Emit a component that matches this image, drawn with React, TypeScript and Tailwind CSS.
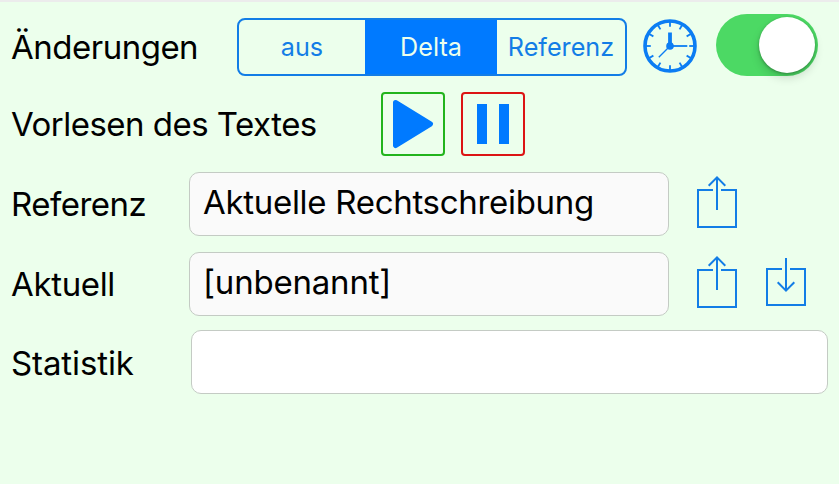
import React from "react";

const BLUE = "#137de6";

function Clock() {
  const ticks = Array.from({ length: 12 }, (_, i) => i * 30);
  return (
    <svg className="ml-[15px] mt-[2px] h-[56px] w-[56px]" viewBox="-28 -28 56 56" fill="none" stroke="#0c7df3">
      <circle r="25" strokeWidth="3.6" />
      {ticks.map((a) => (
        <line key={a} y1="-24" y2="-19.2" strokeWidth="1.8" transform={`rotate(${a})`} />
      ))}
      <line y1="0" y2="-13.5" strokeWidth="3.8" />
      <line x1="0" x2="17.3" strokeWidth="1.8" />
      <line x1="0" y1="0" x2="-11.2" y2="11.2" strokeWidth="1.3" />
      <circle r="3.8" fill="#0c7df3" stroke="none" />
    </svg>
  );
}

function ShareIcon() {
  return (
    <svg className="h-16 w-[42px] shrink-0" viewBox="0 0 42 64" fill="none" stroke={BLUE} strokeWidth="2">
      <path d="M17 18H2v37h38V18H25" />
      <path d="M21 38V5M12.7 13.7L21 5.4l8.3 8.3" />
    </svg>
  );
}

function ImportIcon() {
  return (
    <svg className="h-16 w-[42px] shrink-0" viewBox="0 0 42 64" fill="none" stroke={BLUE} strokeWidth="2">
      <path d="M17 17H2v36h38V17H25" />
      <path d="M21 6v33M12.7 30.3L21 38.6l8.3-8.3" />
    </svg>
  );
}

const field = "flex h-16 shrink-0 items-center rounded-[10px] border border-[#c4cbc4] px-[13px] pb-1";

export default function App() {
  return (
    <div className="h-[484px] w-[839px] overflow-hidden whitespace-nowrap bg-[#ecffec] font-['Inter','Liberation_Sans',sans-serif] text-[33px] leading-[40px] text-black">
      <div className="h-[2px] bg-[#ececec]" />
      <div className="flex flex-col gap-4 pl-[11px] pt-3">
        <div className="flex h-[62px] items-center">
          <span className="w-[226px] pt-[3px] tracking-[-0.5px]">Änderungen</span>
          <div className="flex h-[58px] w-[390px] self-end overflow-hidden rounded-[8px] border-2 border-[#137de6] text-[25.2px] leading-[55px] text-[#137de6]">
            <span className="w-[126px] text-center">aus</span>
            <span className="w-[132px] bg-[#007aff] text-center text-[#ecffec]">Delta</span>
            <span className="flex-1 text-center">Referenz</span>
          </div>
          <Clock />
          <div className="ml-[18px] flex h-[62px] w-[102px] items-center justify-end rounded-full bg-[#4cd964] pr-[3px]">
            <div className="h-14 w-14 rounded-full bg-white shadow-[0_5px_10px_rgba(0,0,0,0.15),0_1px_3px_rgba(0,0,0,0.3)]" />
          </div>
        </div>
        <div className="flex h-16 items-center">
          <span className="w-[370px] tracking-[-0.52px]">Vorlesen des Textes</span>
          <div className="h-16 w-16 rounded-[4px] border-2 border-[#22b41c]">
            <svg className="h-[60px] w-[60px]" viewBox="0 0 60 60">
              <path d="M12.5 8.5L47.5 30L12.5 51.5Z" fill="#007aff" stroke="#007aff" strokeWidth="5" strokeLinejoin="round" />
            </svg>
          </div>
          <div className="ml-4 flex h-16 w-16 items-center justify-center gap-3 rounded-[4px] border-2 border-[#dc1414]">
            <div className="h-10 w-[10px] bg-[#007aff]" />
            <div className="h-10 w-[10px] bg-[#007aff]" />
          </div>
        </div>
        <div className="flex h-16 items-center">
          <span className="w-[178px] tracking-[-0.5px]">Referenz</span>
          <div className={`${field} mr-[27px] w-[480px] bg-[#fafafa] tracking-[-0.3px]`}>Aktuelle Rechtschreibung</div>
          <ShareIcon />
        </div>
        <div className="flex h-16 items-center">
          <span className="w-[178px] tracking-[-0.35px]">Aktuell</span>
          <div className={`${field} mr-[27px] w-[480px] bg-[#fafafa] tracking-[-0.2px]`}>[unbenannt]</div>
          <ShareIcon />
          <div className="w-[27px]" />
          <ImportIcon />
        </div>
        <div className="-mt-[2px] flex h-16 items-center">
          <span className="w-[180px] pt-[1px] tracking-[-0.1px]">Statistik</span>
          <div className={`${field} w-[637px] bg-white`} />
        </div>
      </div>
    </div>
  );
}
